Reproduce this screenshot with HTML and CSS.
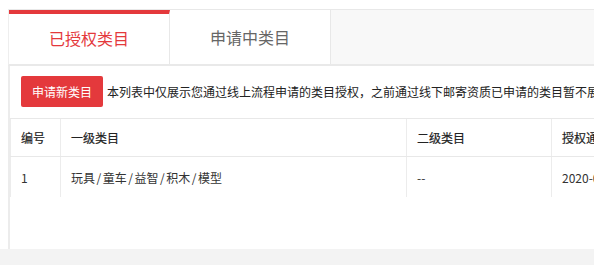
FILE: index.html
```html
<!DOCTYPE html>
<html lang="zh">
<head>
<meta charset="utf-8">
<title>类目管理</title>
<link rel="stylesheet" href="styles.css">
</head>
<body>
<div class="page">
  <div class="wrap">
    <div class="tabs">
      <div class="tab active">已授权类目</div>
      <div class="tab">申请中类目</div>
    </div>
    <div class="panel">
      <div class="toolbar">
        <button class="btn">申请新类目</button>
        <span class="tip">本列表中仅展示您通过线上流程申请的类目授权，之前通过线下邮寄资质已申请的类目暂不展示</span>
      </div>
      <div class="table">
        <div class="row head">
          <div class="cell">编号</div>
          <div class="cell">一级类目</div>
          <div class="cell">二级类目</div>
          <div class="cell">授权通过时间</div>
        </div>
        <div class="row body">
          <div class="cell">1</div>
          <div class="cell">玩具<span class="sep">/</span>童车<span class="sep">/</span>益智<span class="sep">/</span>积木<span class="sep">/</span>模型</div>
          <div class="cell">--</div>
          <div class="cell">2020-05-12</div>
        </div>
      </div>
    </div>
  </div>
  <div class="foot"></div>
</div>
</body>
</html>
```

FILE: styles.css
```css
html, body {
  margin: 0;
  padding: 0;
  background: #fff;
  overflow: hidden;
}
body {
  width: 594px;
  height: 265px;
  font-family: "Noto Sans CJK SC", sans-serif;
  font-size: 12px;
  color: #333;
}
.page {
  display: flex;
  flex-direction: column;
  height: 265px;
}
.wrap {
  padding: 9px 0 0 8px;
  height: 240px;
  display: flex;
  flex-direction: column;
  overflow: hidden;
}
.tabs {
  display: flex;
  background: #f8f8f8;
  border-top: 1px solid #e8e8e8;
  border-left: 1px solid #eeeeee;
  border-bottom: 2px solid #e9e9e9;
  height: 54px;
  flex: none;
}
.tab {
  box-sizing: border-box;
  width: 161px;
  border-right: 1px solid #e8e8e8;
  background: #fff;
  display: flex;
  align-items: center;
  justify-content: center;
  font-size: 16px;
  color: #666;
}
.tab.active {
  color: #e4393c;
  border-top: 4px solid #e4393c;
  padding-bottom: 2px;
}
.panel {
  flex: 1;
  border-left: 2px solid #ececec;
  background: #fff;
  overflow: hidden;
}
.toolbar {
  display: flex;
  align-items: center;
  gap: 4px;
  padding: 10px 0 0 11px;
  height: 31px;
  white-space: nowrap;
}
.btn {
  flex: none;
  width: 82px;
  height: 31px;
  border: none;
  border-radius: 2px;
  background: #e4393c;
  color: #fff;
  font-family: "Noto Sans CJK SC", sans-serif;
  font-size: 12px;
  padding: 0;
}
.tip {
  font-size: 12px;
  color: #222;
}
.table {
  margin-top: 11px;
  width: 800px;
}
.row {
  display: grid;
  grid-template-columns: 50px 346px 145px 259px;
}
.row.head {
  border-top: 1px solid #e8e8e8;
  border-bottom: 1px solid #e8e8e8;
  height: 37px;
}
.row.body {
  height: 40px;
}
.cell {
  border-left: 1px solid #ececec;
  padding-left: 10px;
  display: flex;
  align-items: center;
  white-space: nowrap;
  font-size: 12px;
  color: #333;
}
.sep {
  padding: 0 1.5px;
}
.row.head .cell {
  color: #222;
  -webkit-text-stroke: 0.2px #222;
}
.foot {
  margin-top: auto;
  height: 16px;
  background: #f3f3f3;
  flex: none;
}
```
